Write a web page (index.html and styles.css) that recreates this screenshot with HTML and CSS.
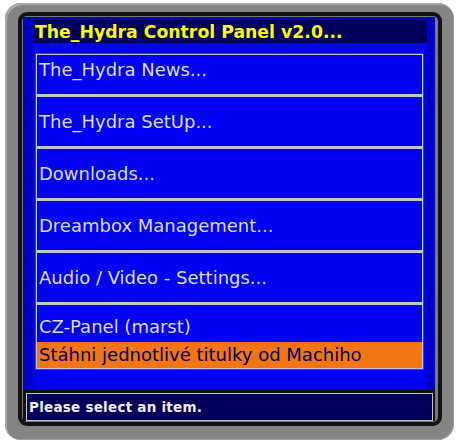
FILE: index.html
```html
<!DOCTYPE html>
<html lang="cs">
<head>
  <meta charset="UTF-8">
  <title>The_Hydra Control Panel</title>
  <link rel="stylesheet" href="styles.css">
</head>
<body>
  <div class="frame">
    <div class="bezel">
      <div class="screen">
        <div class="panel">
          <div class="title">The_Hydra Control Panel v2.0...</div>
          <div class="menu">
            <div class="item first">The_Hydra News...</div>
            <div class="item">The_Hydra SetUp...</div>
            <div class="item">Downloads...</div>
            <div class="item">Dreambox Management...</div>
            <div class="item">Audio / Video - Settings...</div>
            <div class="item last">
              <div class="line">CZ-Panel (marst)</div>
              <div class="line selected">Stáhni jednotlivé titulky od Machiho</div>
            </div>
          </div>
        </div>
        <div class="footer">
          <div class="status">Please select an item.</div>
        </div>
      </div>
    </div>
  </div>
</body>
</html>
```

FILE: styles.css
```css
* { box-sizing: border-box; }
body {
  margin: 0; background: #fff;
  font-family: 'DejaVu Sans', Verdana, sans-serif;
}
.frame {
  margin: 3px 0 0 5px; width: 449px; height: 437px;
  padding: 9px 12px 14px 13px;
  background: #848484; border-radius: 16px;
  box-shadow: inset 2px 2px 0 #a8a8a8, inset -1px -1px 0 #9c9c9c;
}
.bezel {
  border: 4px solid #141414; border-radius: 9px;
  padding: 1px 3px 1px 1px; background: #7a7a7a;
}
.screen {
  width: 412px; height: 404px; background: #0000c4;
  display: flex; flex-direction: column;
}
.panel {
  margin: 3px 0 0 10px; width: 394px; height: 370px;
  background: #0000f4;
}
.title {
  height: 23px; background: #00005a; color: #ffff00;
  font-weight: bold; font-size: 17.3px; line-height: 24px; padding-left: 2px;
  white-space: nowrap;
}
.menu {
  margin: 10px 3px 0 2px; height: 317px;
  border: 1px solid #4a4a4a; box-shadow: inset 0 0 0 1px #c4c4c4;
  padding: 1px; color: #dcdce4; font-size: 18px;
}
.item {
  padding: 13px 0 12px 2px; line-height: 24px;
  border-bottom: 3px solid #c4c4c4; white-space: nowrap;
}
.item.first { padding-top: 3px; }
.item.last { padding: 10px 0 0 0; border-bottom: none; }
.line { padding-left: 2px; }
.selected {
  margin-top: 3px; height: 26px; line-height: 26px;
  background: #f27511; color: #00005a;
}
.footer {
  flex: 1; background: #101010; padding: 3px 2px 0 3px;
}
.status {
  height: 28px; background: #00005a; border: 1px solid #c8c8c8;
  color: #f0f0f0; font-size: 13.5px; font-weight: bold; line-height: 26px;
  letter-spacing: 0.25px; padding-left: 2px;
}
```
